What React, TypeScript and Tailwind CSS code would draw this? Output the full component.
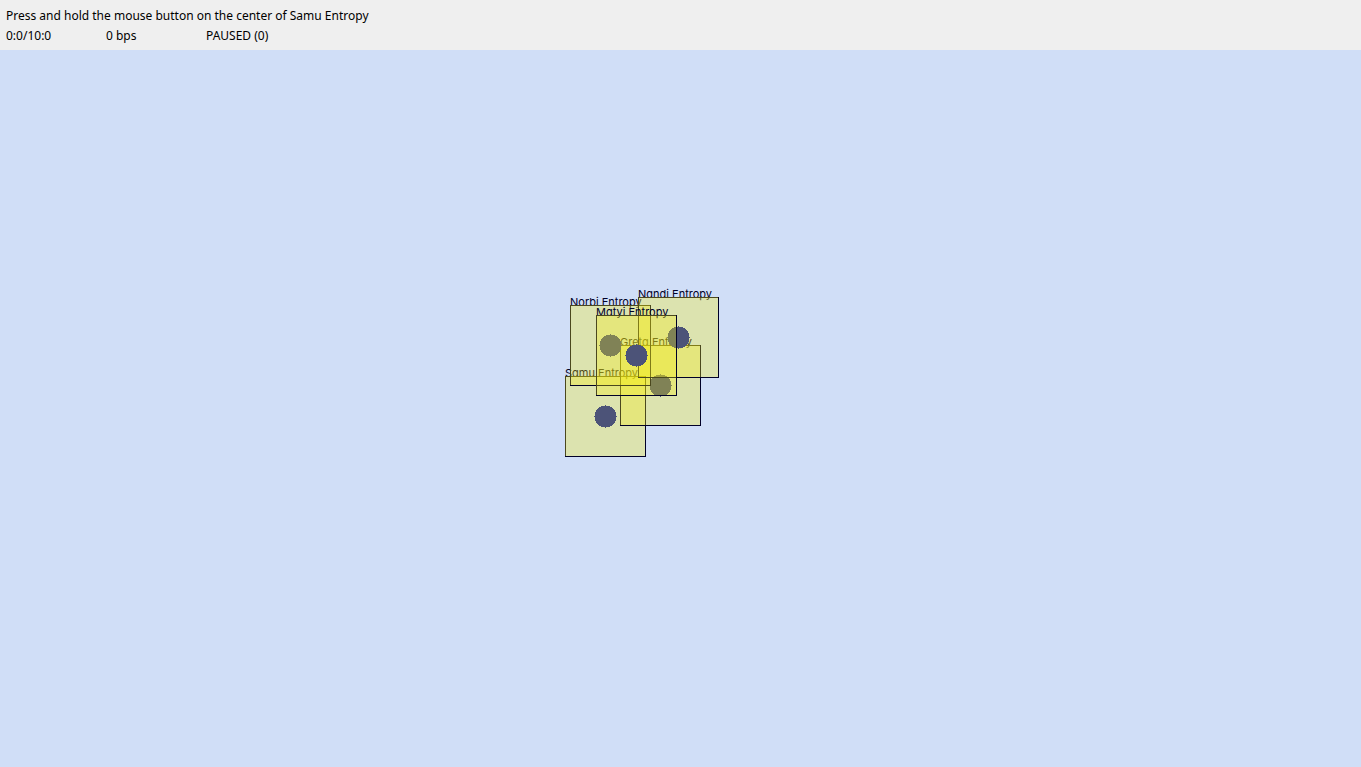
interface Entropy {
  name: string;
  box: string;
}

// Listed back to front: each translucent pane tints everything beneath it.
const entropies: Entropy[] = [
  { name: 'Samu Entropy', box: 'left-[565px] top-[326px]' },
  { name: 'Greta Entropy', box: 'left-[620px] top-[295px]' },
  { name: 'Norbi Entropy', box: 'left-[570px] top-[255px]' },
  { name: 'Nandi Entropy', box: 'left-[638px] top-[247px]' },
  { name: 'Matyi Entropy', box: 'left-[596px] top-[265px]' },
];

function EntropyBox({ name, box }: Entropy) {
  return (
    <div className={`absolute size-[81px] border border-[#000028] ${box}`}>
      <span className="absolute -left-px -top-[12px] whitespace-nowrap font-['Inter',sans-serif] text-[11px] leading-[16px] text-[#000028] [font-feature-settings:'cv11']">
        {name}
      </span>
      <svg
        className="absolute left-[28px] top-[28px] size-[23px]"
        viewBox="0 0 23 23"
        shapeRendering="crispEdges"
        aria-hidden="true"
      >
        <circle cx="11.5" cy="11.5" r="11" fill="#0211a8" />
        <path d="M11 0h1v23h-1zM0 11h23v1H0z" fill="#0211a8" />
      </svg>
      <div className="absolute -left-px -top-px size-[80px] bg-[#f9ee0a]/30" />
    </div>
  );
}

export default function App() {
  return (
    <div className="flex min-h-screen flex-col bg-[#d0def7]">
      <header className="flex flex-col bg-[#efefef] px-[6px] pt-[6px] pb-1 font-['Noto_Sans',sans-serif] text-[12px] leading-[20px] text-black">
        <p>Press and hold the mouse button on the center of Samu Entropy</p>
        <div className="flex">
          <span className="w-[100px]">0:0/10:0</span>
          <span className="w-[100px]">0 bps</span>
          <span>PAUSED (0)</span>
        </div>
      </header>
      <main className="relative flex-1 overflow-hidden">
        {entropies.map((entropy) => (
          <EntropyBox key={entropy.name} {...entropy} />
        ))}
      </main>
    </div>
  );
}
